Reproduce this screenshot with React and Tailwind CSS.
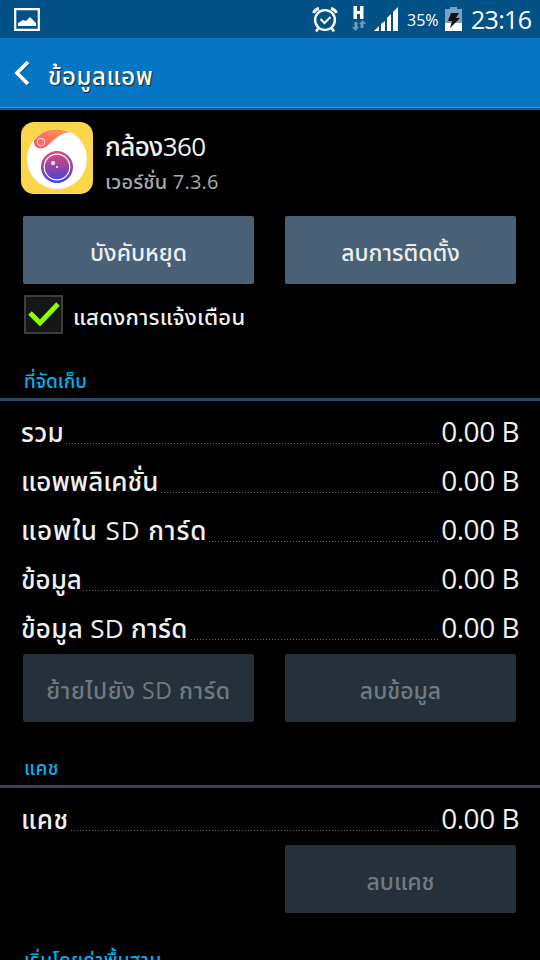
const storage = [
  { label: 'รวม', className: 'w-[45px] tracking-[0.3px]', value: '0.00 B' },
  { label: 'แอพพลิเคชั่น', className: 'w-[140px] tracking-[0.1px]', value: '0.00 B' },
  { label: 'แอพใน SD การ์ด', className: 'w-[188px] tracking-[0.9px]', value: '0.00 B' },
  { label: 'ข้อมูล', className: 'w-[62px]', value: '0.00 B' },
  { label: 'ข้อมูล SD การ์ด', className: 'w-[170px] tracking-[0.3px]', value: '0.00 B' }
]

export default function App() {
  return (
    <div className="h-[960px] w-[540px] overflow-hidden bg-black font-['Open_Sans','Noto_Sans_Thai','Noto_Sans',sans-serif] font-medium text-[#f0f0f0]">
      <StatusBar />
      <header className="flex h-[72px] items-center border-b-2 border-[#025a9e] bg-[#0676c4] shadow-[inset_0_-1px_0_#3793d2]">
        <svg className="ml-[14px] h-[28px] w-[16px]" viewBox="0 0 16 28" fill="none">
          <path d="M15 3 3.500 14 15 25" transform="translate(0 1)" stroke="#17507c" strokeWidth="3.6" />
          <path d="M14 3 3 14 14 25" stroke="#fff" strokeWidth="3.8" />
        </svg>
        <h1 className="ml-[18px] mt-[5px] whitespace-nowrap text-[24px] leading-none tracking-[0.6px] text-white [text-shadow:1px_1px_1px_#222]">ข้อมูลแอพ</h1>
      </header>

      <main>
        <div className="flex h-[106px] pl-[21px] pt-[12px]">
          <AppIcon />
          <div className="ml-3 whitespace-nowrap">
            <div className="flex h-[48px] items-center text-[26px] leading-none tracking-[-0.6px]">กล้อง360</div>
            <div className="flex h-[24px] items-center text-[20px] leading-none tracking-[0.2px] text-[#a9a9a9]">เวอร์ชั่น 7.3.6</div>
          </div>
        </div>

        <div className="flex gap-[31px] pl-[23px]">
          <Button>บังคับหยุด</Button>
          <Button>ลบการติดตั้ง</Button>
        </div>

        <div className="mt-[11px] flex h-[39px] items-center pl-[24px]">
          <div className="size-[39px] border-2 border-[#3d3d3d] bg-[#141617]">
            <svg className="size-full" viewBox="0 0 35 35" fill="none">
              <path d="m4 16 10 10L32 7" stroke="#8cff00" strokeWidth="5" />
            </svg>
          </div>
          <span className="ml-[10px] mt-[2px] whitespace-nowrap text-[22px] leading-none tracking-[0.3px]">แสดงการแจ้งเตือน</span>
        </div>

        <SectionTitle className="h-[67px]">ที่จัดเก็บ</SectionTitle>
        <div className="pt-[8px]">
          {storage.map((row) => (
            <Row key={row.label} {...row} />
          ))}
        </div>
        <div className="flex gap-[31px] pl-[23px]">
          <Button disabled className="tracking-[0.6px]">ย้ายไปยัง SD การ์ด</Button>
          <Button disabled>ลบข้อมูล</Button>
        </div>

        <SectionTitle className="h-[66px] tracking-[0.5px]">แคช</SectionTitle>
        <div className="pt-[8px]">
          <Row label="แคช" className="w-[50px] tracking-[0.6px]" value="0.00 B" />
        </div>
        <div className="flex pl-[285px]">
          <Button disabled>ลบแคช</Button>
        </div>

        <SectionTitle className="h-[67px] tracking-[0.5px]">เริ่มโดยค่าพื้นฐาน</SectionTitle>
      </main>
    </div>
  )
}

function StatusBar() {
  return (
    <div className="flex h-[38px] items-center bg-[#025288] text-white">
      <svg className="ml-[14px] h-[23px] w-[26px]" viewBox="0 0 26 23">
        <path d="M1.2 1.2h23.6v20.6H1.2z" fill="none" stroke="#fff" strokeWidth="2.2" />
        <path d="M4 18v-3l5-3 3 1 4-4 6 6v3z" fill="#fff" />
      </svg>
      <svg className="ml-[272px] mt-[2px] h-[26px] w-[26px]" viewBox="0 0 26 26" fill="none" stroke="#fff">
        <circle cx="13" cy="13" r="9.9" strokeWidth="2.4" />
        <path d="m8.500 12 4 4 6-6" strokeWidth="2" />
        <path d="m6.500 21-2.500 3.500M19.500 21l2.500 3.500" strokeWidth="2.6" />
        <path d="M1.500 6Q3 2.500 7 1.500M24.500 6Q23 2.500 19 1.500" strokeWidth="3" />
      </svg>
      <svg className="ml-[14px] h-[26px] w-[14px]" viewBox="0 0 14 26">
        <path d="M1.500 0H5v5h3V0h3.500v13H8V8H5v5H1.500z" fill="#fff" />
        <path d="M2.500 16h3v5H7l-3.500 4L0 21h2.500zM8.500 22v-4H7l3.500-4 3.500 4h-2.500v4z" fill="#6d9cbe" />
      </svg>
      <svg className="ml-[8px] h-[24px] w-[24px]" viewBox="0 0 24 24" fill="#fff">
        <path d="M0 24 5 19v5zM7 17l4-3v10H7zM13 11l4-4v17h-4zM19 5l5-5v24h-5z" />
      </svg>
      <span className="ml-[9px] mt-[2px] w-[38px] whitespace-nowrap text-[16px] leading-none">35%</span>
      <svg className="h-[24px] w-[17px]" viewBox="0 0 17 24">
        <path d="M5 0h7v2h5v14H0V2h5z" fill="#79a3c2" />
        <path d="M0 16h17v8H0z" fill="#fff" />
        <path d="M6 6h8l-3 5h4L5 21l2-7H3z" fill="#111" />
      </svg>
      <span className="ml-[9px] whitespace-nowrap text-[25px] leading-none tracking-[-0.7px]">23:16</span>
    </div>
  )
}

function AppIcon() {
  return (
    <svg className="size-[72px]" viewBox="0 0 72 72">
      <defs>
        <linearGradient id="lens" x1="0" y1="0" x2="0" y2="1">
          <stop stopColor="#e64b77" />
          <stop offset=".5" stopColor="#9743a8" />
          <stop offset="1" stopColor="#3b43e2" />
        </linearGradient>
        <linearGradient id="swoosh" x1="1" y1="0" x2="0" y2="1">
          <stop stopColor="#ffa14d" />
          <stop offset="1" stopColor="#ff4b66" />
        </linearGradient>
      </defs>
      <rect width="72" height="72" rx="13" fill="#fbd54a" />
      <circle cx="36" cy="37" r="30" fill="#fff" />
      <path d="M13.500 18C23 6 37 5 49 10c-12 2-17 9-23 14-6 5-14 2-13-6z" fill="url(#swoosh)" />
      <circle cx="20" cy="20" r="3.700" fill="#ff6a68" stroke="#ffe0d8" strokeWidth="1.200" />
      <circle cx="36" cy="45" r="16" fill="url(#lens)" />
      <circle cx="36" cy="45" r="12.800" fill="none" stroke="#fff" strokeWidth="1.200" />
      <circle cx="32" cy="41" r="2" fill="#fff" />
      <circle cx="36" cy="45" r="1" fill="#fff" />
    </svg>
  )
}

function Button({ disabled, className = '', children }) {
  return (
    <button
      disabled={disabled}
      className={`flex h-[68px] w-[231px] items-center justify-center whitespace-nowrap rounded-[2px] pt-[4px] text-[23px] leading-none ${disabled ? 'bg-[#25303b] text-[#727980]' : 'bg-[#486177] text-[#ececec]'} ${className}`}
    >
      {children}
    </button>
  )
}

function SectionTitle({ className, children }) {
  return (
    <h2 className={`flex items-end whitespace-nowrap border-b-3 border-[#2c4a66] pb-[7px] pl-[24px] text-[19px] leading-none text-[#00b2f0] ${className}`}>
      {children}
    </h2>
  )
}

function Row({ label, className, value }) {
  return (
    <div className="flex h-[49px] pl-[21px] pr-[21px]">
      <span className={`flex h-[45px] shrink-0 items-center whitespace-nowrap text-[26px] leading-none ${className}`}>{label}</span>
      <span className="mt-[34px] h-px flex-1 bg-[repeating-linear-gradient(90deg,#686868_0_1px,transparent_1px_3px)]" />
      <span className="flex h-[44px] w-[79px] items-center justify-end whitespace-nowrap text-[28px] leading-none tracking-[-0.5px]">{value}</span>
    </div>
  )
}
